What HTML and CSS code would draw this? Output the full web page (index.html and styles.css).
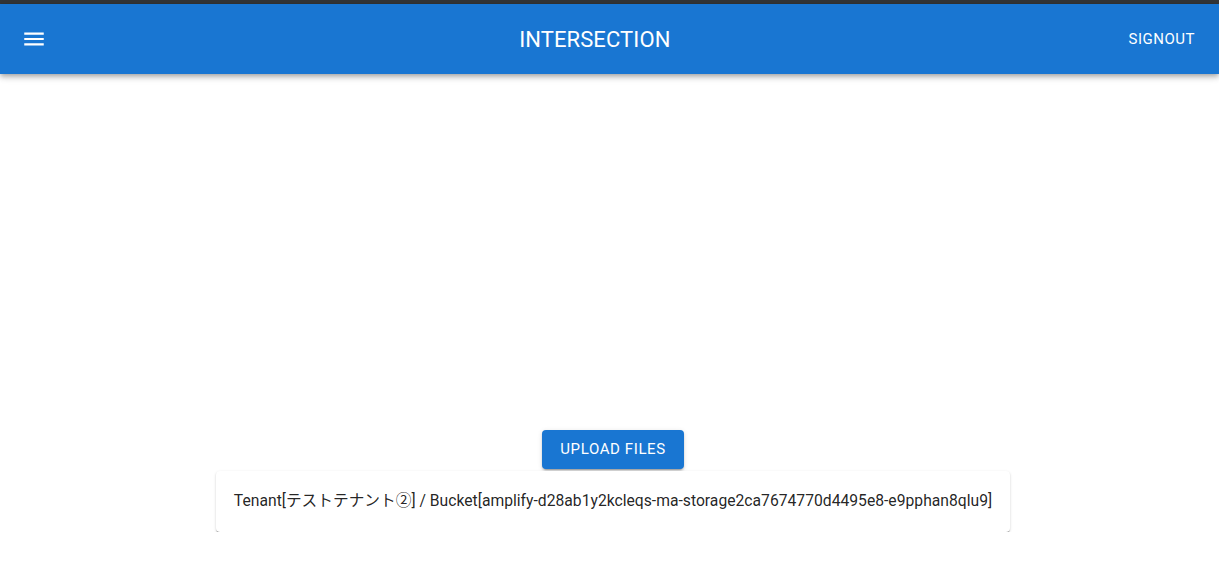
FILE: index.html
```html
<!DOCTYPE html>
<html lang="ja">
<head>
<meta charset="utf-8">
<title>INTERSECTION</title>
<link rel="stylesheet" href="styles.css">
</head>
<body>
<div class="topline"></div>
<header class="appbar">
  <button class="menu-btn" aria-label="menu">
    <svg viewBox="0 0 24 24" width="26" height="26"><path fill="#fff" d="M3 18h18v-2H3v2zm0-5h18v-2H3v2zm0-7v2h18V6H3z"/></svg>
  </button>
  <div class="title">INTERSECTION</div>
  <button class="signout">SIGNOUT</button>
</header>
<main class="content">
  <button class="upload">UPLOAD FILES</button>
  <div class="card">Tenant[テストテナント②] / Bucket[amplify-d28ab1y2kcleqs-ma-storage2ca7674770d4495e8-e9pphan8qlu9]</div>
</main>
</body>
</html>
```
FILE: styles.css
```css
* { box-sizing: border-box; }
html, body { margin: 0; padding: 0; background: #fff; }
body {
  font-family: Roboto, "Noto Sans CJK JP", sans-serif;
  color: rgba(0,0,0,0.87);
}
.topline { height: 4px; background: #333537; }
.appbar {
  height: 70px;
  background: #1976d2;
  color: #fff;
  display: flex;
  align-items: center;
  padding: 0 16px 0 9px;
  box-shadow: 0 2px 4px -1px rgba(0,0,0,0.2), 0 4px 5px 0 rgba(0,0,0,0.14), 0 1px 10px 0 rgba(0,0,0,0.12);
  position: relative;
}
.menu-btn {
  background: none;
  border: 0;
  padding: 12px;
  display: flex;
  cursor: pointer;
}
.title {
  flex: 1;
  text-align: center;
  font-size: 22px;
  font-weight: 400;
  letter-spacing: 0.1px;
  padding-left: 10px;
}
.signout {
  background: none;
  border: 0;
  color: #fff;
  font-family: inherit;
  font-size: 15px;
  font-weight: 400;
  letter-spacing: 0.5px;
  padding: 6px 8px;
  cursor: pointer;
}
.content {
  display: flex;
  flex-direction: column;
  align-items: center;
  padding-top: 356px;
  padding-left: 7px;
}
.upload {
  background: #1976d2;
  color: #fff;
  border: 0;
  border-radius: 4px;
  font-family: inherit;
  font-size: 15px;
  font-weight: 400;
  letter-spacing: 0.6px;
  line-height: 23px;
  padding: 8px 18px;
  box-shadow: 0 3px 1px -2px rgba(0,0,0,0.2), 0 2px 2px 0 rgba(0,0,0,0.14), 0 1px 5px 0 rgba(0,0,0,0.12);
  cursor: pointer;
}
.card {
  margin-top: 2px;
  background: #fff;
  border-radius: 4px;
  padding: 18px 18px 19px;
  font-size: 15.7px;
  line-height: 24px;
  box-shadow: 0 2px 1px -1px rgba(0,0,0,0.4), 0 1px 1px 0 rgba(0,0,0,0.16), 0 1px 3px 0 rgba(0,0,0,0.14);
}
```
